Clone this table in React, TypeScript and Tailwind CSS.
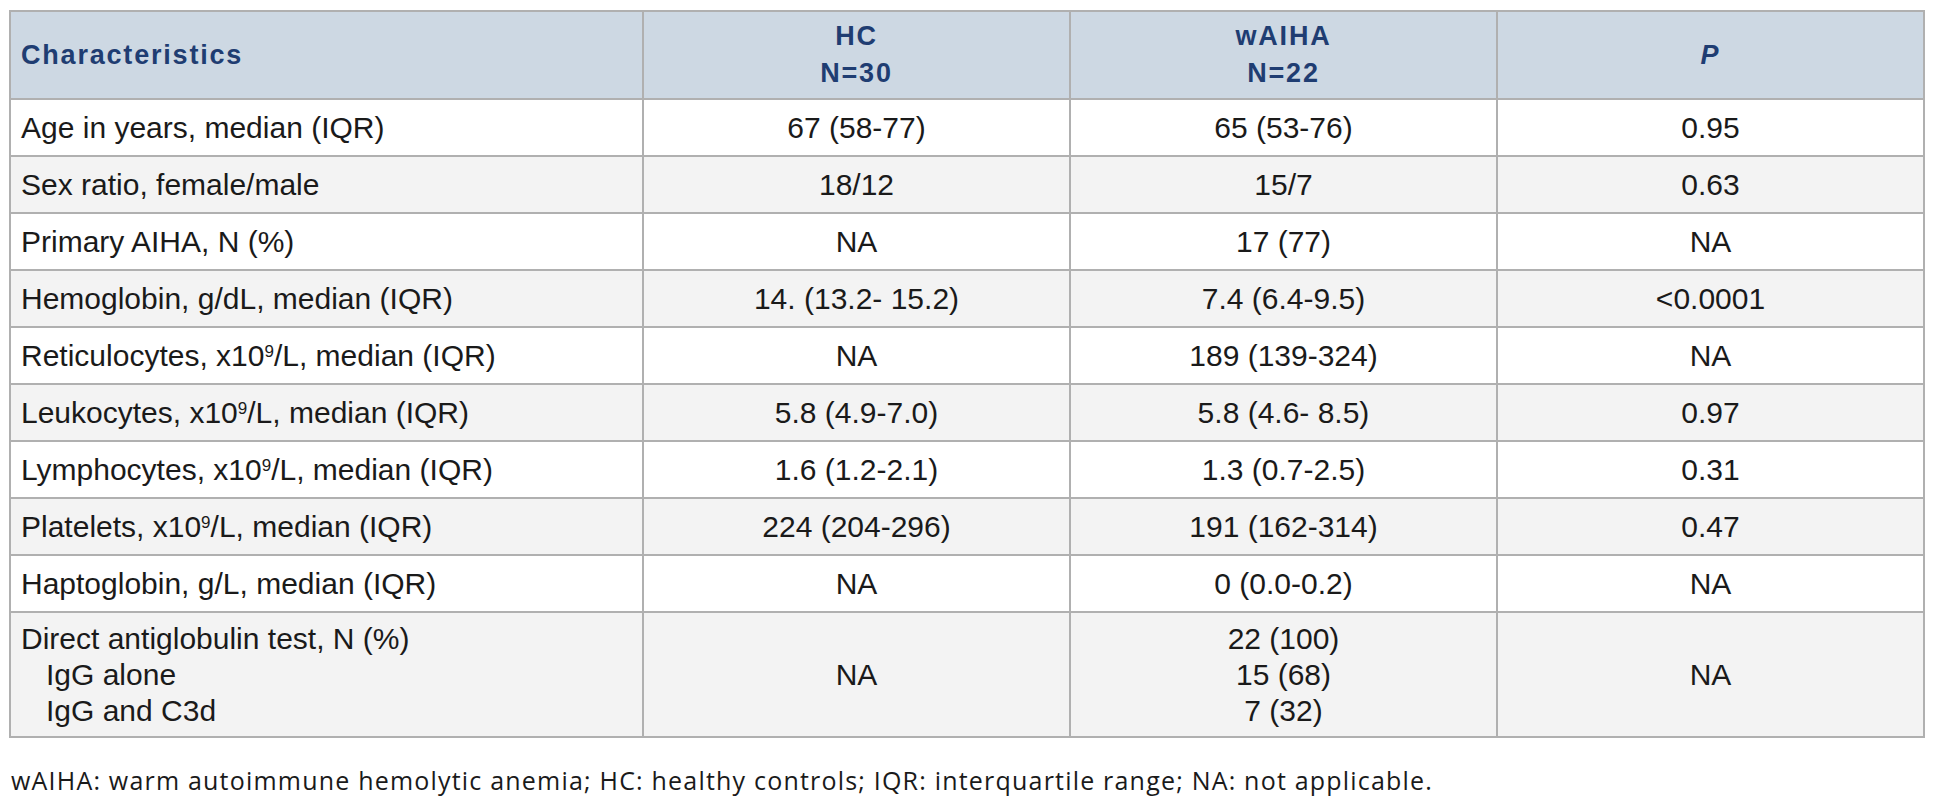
const ROWS: { label: React.ReactNode; hc: string; w: string; p: string }[] = [
  { label: "Age in years, median (IQR)", hc: "67 (58-77)", w: "65 (53-76)", p: "0.95" },
  { label: "Sex ratio, female/male", hc: "18/12", w: "15/7", p: "0.63" },
  { label: "Primary AIHA, N (%)", hc: "NA", w: "17 (77)", p: "NA" },
  { label: "Hemoglobin, g/dL, median (IQR)", hc: "14. (13.2- 15.2)", w: "7.4 (6.4-9.5)", p: "<0.0001" },
  {
    label: (
      <>
        Reticulocytes, x10<sup className="text-[17px]">9</sup>/L, median (IQR)
      </>
    ),
    hc: "NA",
    w: "189 (139-324)",
    p: "NA",
  },
  {
    label: (
      <>
        Leukocytes, x10<sup className="text-[17px]">9</sup>/L, median (IQR)
      </>
    ),
    hc: "5.8 (4.9-7.0)",
    w: "5.8 (4.6- 8.5)",
    p: "0.97",
  },
  {
    label: (
      <>
        Lymphocytes, x10<sup className="text-[17px]">9</sup>/L, median (IQR)
      </>
    ),
    hc: "1.6 (1.2-2.1)",
    w: "1.3 (0.7-2.5)",
    p: "0.31",
  },
  {
    label: (
      <>
        Platelets, x10<sup className="text-[17px]">9</sup>/L, median (IQR)
      </>
    ),
    hc: "224 (204-296)",
    w: "191 (162-314)",
    p: "0.47",
  },
  { label: "Haptoglobin, g/L, median (IQR)", hc: "NA", w: "0 (0.0-0.2)", p: "NA" },
];

const cell = "border-x-2 border-y-2 border-[#b0b0b0] px-[10px] align-middle";

export default function App() {
  return (
    <div className="min-h-screen bg-white pl-[9px] pt-[10px] font-['Liberation_Sans',Arial,sans-serif] text-[#1a1a1a]">
      <table className="w-[1914px] table-fixed border-collapse">
        <colgroup>
          <col className="w-[633px]" />
          <col className="w-[427px]" />
          <col className="w-[427px]" />
          <col className="w-[427px]" />
        </colgroup>
        <thead>
          <tr className="h-[88px] bg-[#cdd8e3] text-[27px] font-bold leading-[37px] tracking-[1.8px] text-[#1f3d72]">
            <th className={`${cell} text-left`}>Characteristics</th>
            <th className={`${cell} text-center`}>
              HC
              <br />
              N=30
            </th>
            <th className={`${cell} text-center`}>
              wAIHA
              <br />
              N=22
            </th>
            <th className={`${cell} text-center italic`}>P</th>
          </tr>
        </thead>
        <tbody className="text-[30px] leading-[36px]">
          {ROWS.map((r, i) => (
            <tr key={i} className={`h-[57px] ${i % 2 ? "bg-[#f3f3f3]" : "bg-white"}`}>
              <td className={`${cell} text-left`}>{r.label}</td>
              <td className={`${cell} text-center`}>{r.hc}</td>
              <td className={`${cell} text-center`}>{r.w}</td>
              <td className={`${cell} text-center`}>{r.p}</td>
            </tr>
          ))}
          <tr className="h-[125px] bg-[#f3f3f3]">
            <td className={`${cell} text-left`}>
              <div>Direct antiglobulin test, N (%)</div>
              <div className="pl-[25px]">IgG alone</div>
              <div className="pl-[25px]">IgG and C3d</div>
            </td>
            <td className={`${cell} text-center`}>NA</td>
            <td className={`${cell} text-center`}>
              <div>22 (100)</div>
              <div>15 (68)</div>
              <div>7 (32)</div>
            </td>
            <td className={`${cell} text-center`}>NA</td>
          </tr>
        </tbody>
      </table>
      <p className="mt-[24px] pl-[2px] font-['Open_Sans',sans-serif] text-[25px] tracking-[1.2px] text-[#1a1a1a]">
        wAIHA: warm autoimmune hemolytic anemia; HC: healthy controls; IQR: interquartile range; NA: not applicable.
      </p>
    </div>
  );
}
